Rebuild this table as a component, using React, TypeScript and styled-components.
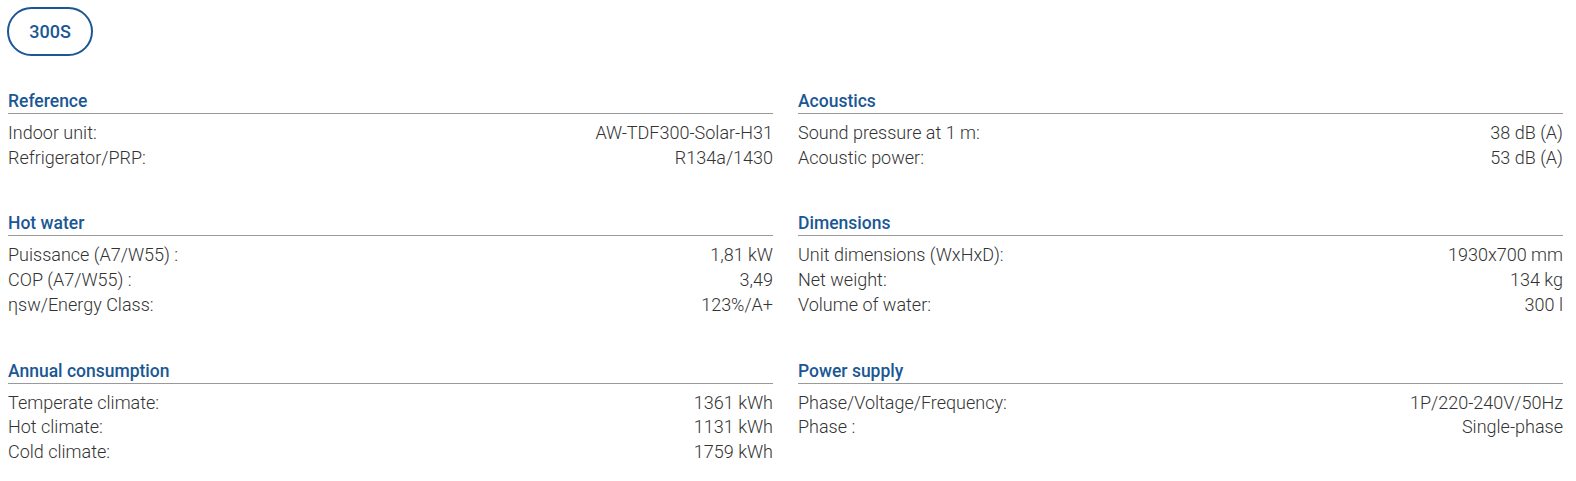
import React from "react";
import styled, { createGlobalStyle } from "styled-components";

const GlobalStyle = createGlobalStyle`
  html, body { margin: 0; padding: 0; background: #ffffff; }
  body { font-family: Roboto, "Liberation Sans", Arial, sans-serif; }
`;

const Page = styled.div`
  padding: 7px 13px 0 8px;
`;

const ModelButton = styled.button`
  display: flex;
  align-items: center;
  justify-content: center;
  box-sizing: border-box;
  width: 86px;
  height: 49px;
  margin-left: -1px;
  padding: 0;
  border: 2px solid #1a5794;
  border-radius: 25px;
  background: #ffffff;
  color: #1a5794;
  font-family: Roboto, "Liberation Sans", Arial, sans-serif;
  font-weight: 500;
  font-size: 18px;
  cursor: pointer;
`;

const Grid = styled.div`
  display: grid;
  grid-template-columns: 1fr 1fr;
  column-gap: 25px;
  row-gap: 42px;
  margin-top: 34px;
`;

const Section = styled.section`
  display: flex;
  flex-direction: column;
`;

const Heading = styled.h3`
  margin: 0 0 7px 0;
  padding-bottom: 1px;
  border-bottom: 1px solid #9a9a9a;
  font-size: 17.5px;
  line-height: 22px;
  font-weight: 500;
  color: #1a5794;
`;

const Row = styled.div`
  display: flex;
  justify-content: space-between;
  font-size: 18px;
  line-height: 24.7px;
  font-weight: 300;
  color: #333333;
`;

type Spec = { title: string; rows: [string, string][] };

const sections: Spec[] = [
  {
    title: "Reference",
    rows: [
      ["Indoor unit:", "AW-TDF300-Solar-H31"],
      ["Refrigerator/PRP:", "R134a/1430"],
    ],
  },
  {
    title: "Acoustics",
    rows: [
      ["Sound pressure at 1 m:", "38 dB (A)"],
      ["Acoustic power:", "53 dB (A)"],
    ],
  },
  {
    title: "Hot water",
    rows: [
      ["Puissance (A7/W55) :", "1,81 kW"],
      ["COP (A7/W55) :", "3,49"],
      ["ηsw/Energy Class:", "123%/A+"],
    ],
  },
  {
    title: "Dimensions",
    rows: [
      ["Unit dimensions (WxHxD):", "1930x700 mm"],
      ["Net weight:", "134 kg"],
      ["Volume of water:", "300 l"],
    ],
  },
  {
    title: "Annual consumption",
    rows: [
      ["Temperate climate:", "1361 kWh"],
      ["Hot climate:", "1131 kWh"],
      ["Cold climate:", "1759 kWh"],
    ],
  },
  {
    title: "Power supply",
    rows: [
      ["Phase/Voltage/Frequency:", "1P/220-240V/50Hz"],
      ["Phase :", "Single-phase"],
    ],
  },
];

export default function App() {
  return (
    <>
      <GlobalStyle />
      <Page>
        <ModelButton>300S</ModelButton>
        <Grid>
          {sections.map((s) => (
            <Section key={s.title}>
              <Heading>{s.title}</Heading>
              {s.rows.map(([label, value]) => (
                <Row key={label}>
                  <span>{label}</span>
                  <span>{value}</span>
                </Row>
              ))}
            </Section>
          ))}
        </Grid>
      </Page>
    </>
  );
}
